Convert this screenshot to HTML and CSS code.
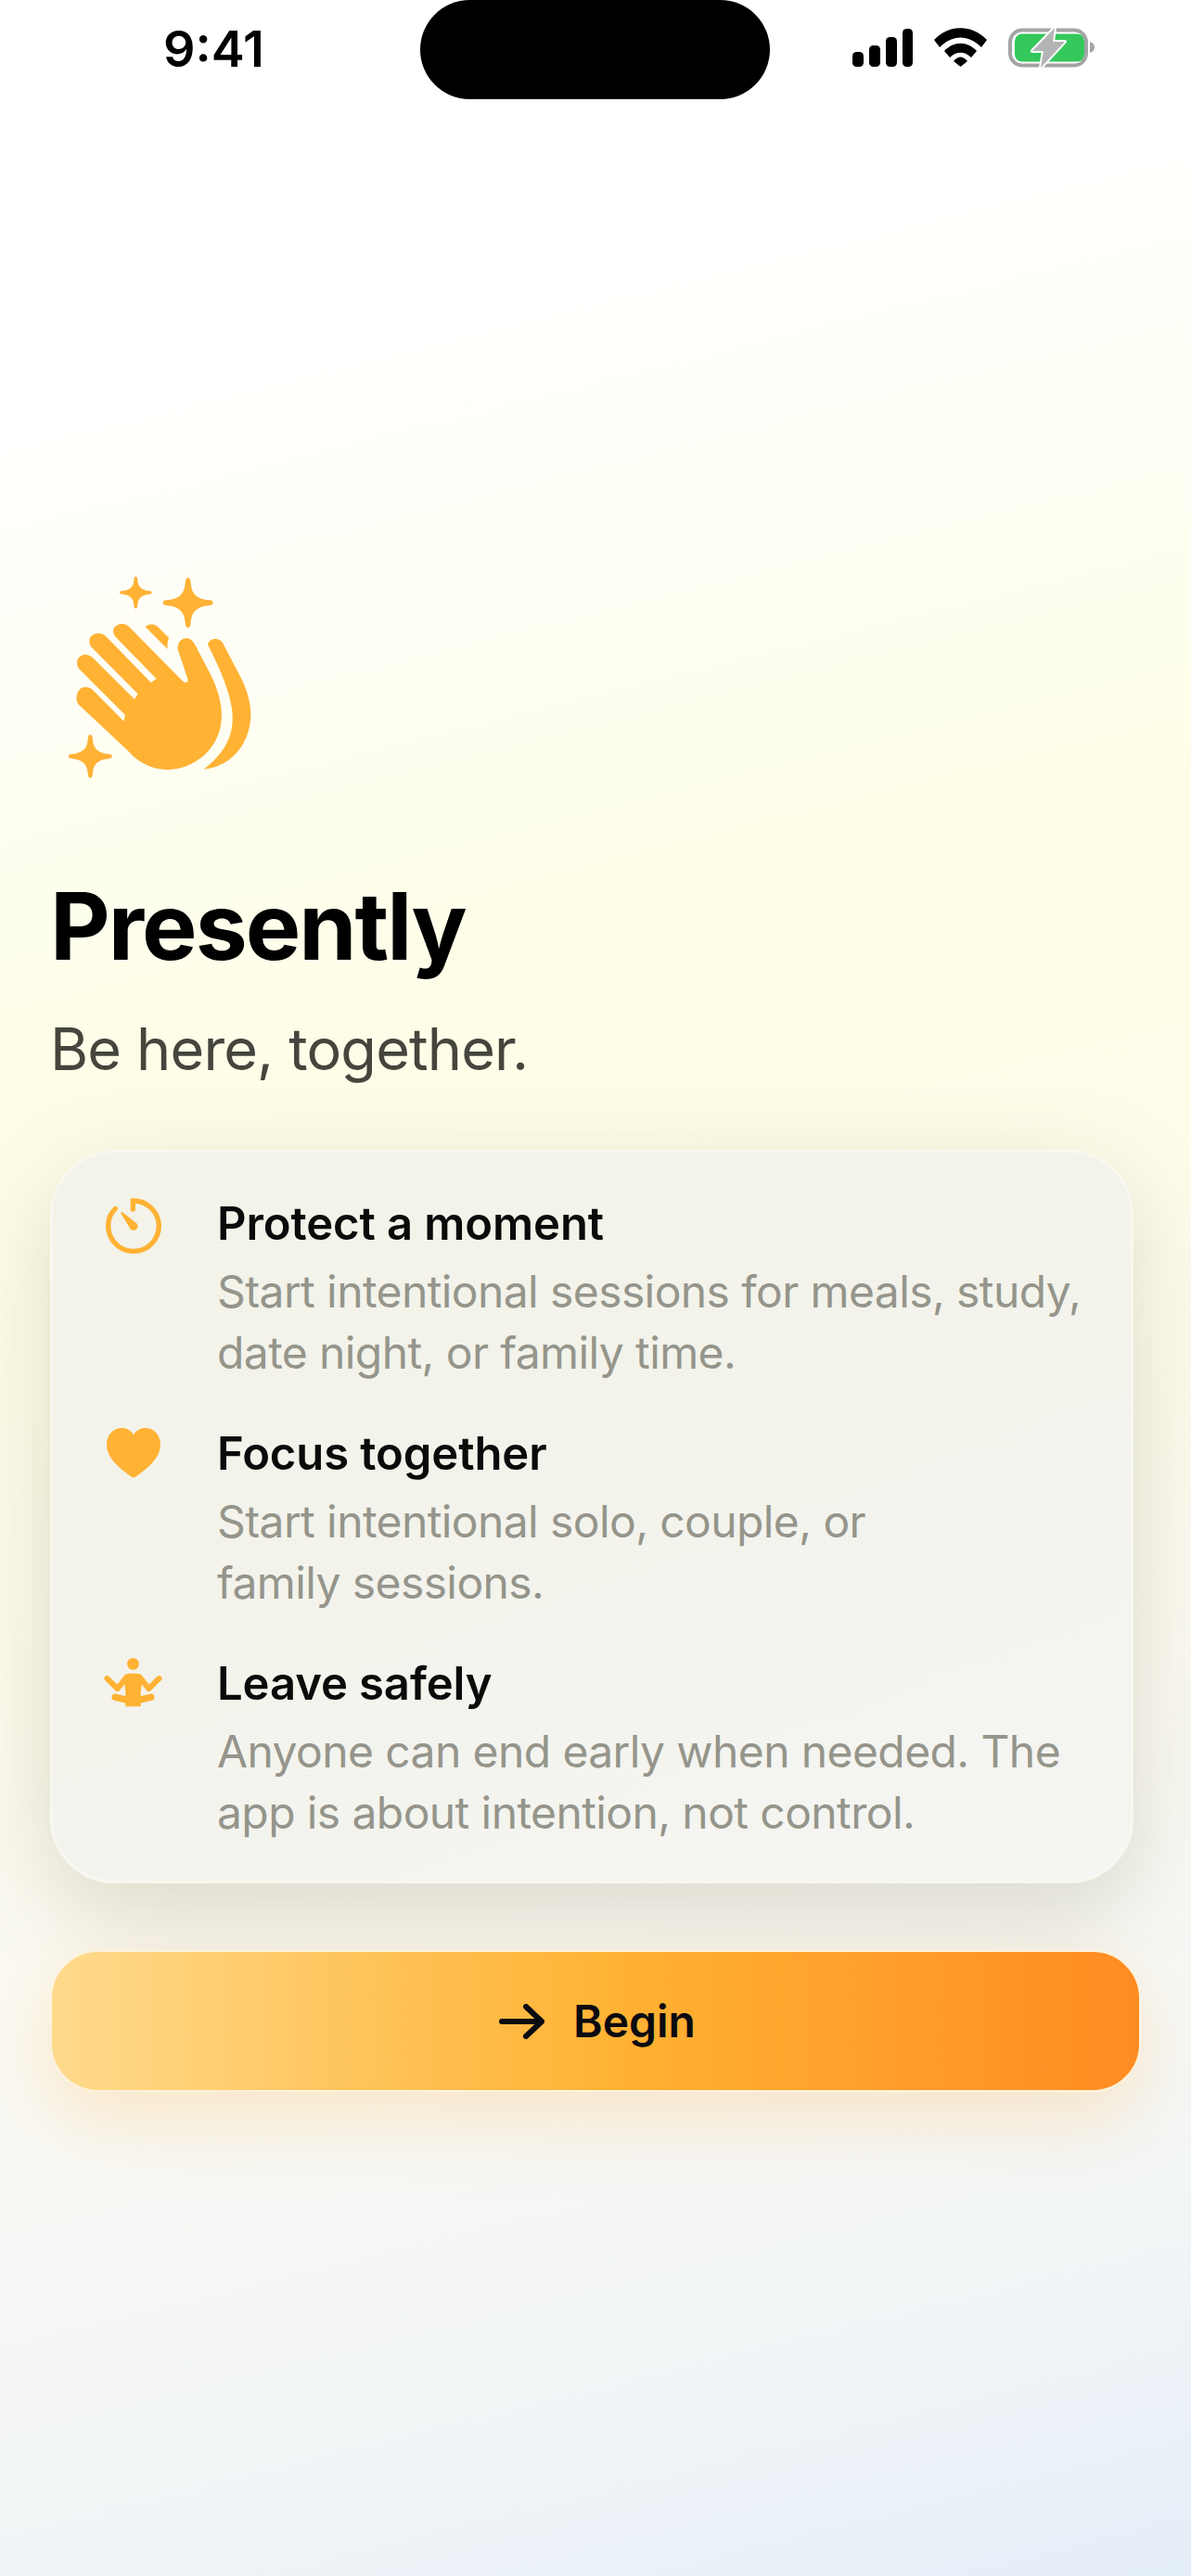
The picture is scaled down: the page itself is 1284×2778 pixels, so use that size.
FILE: index.html
```html
<!DOCTYPE html>
<html>

<head>
	<title>Presently</title>
	<link rel="stylesheet" href="styles.css">
</head>

<body>
	<div id="screen">
		<div class="status">
			<div class="time">9:41</div>
			<div class="notch"></div>
			<div class="status-icons">
				<svg class="signal" viewBox="0 0 65 41">
					<rect x="0" y="25" width="12" height="16" rx="4.5"/>
					<rect x="18" y="18" width="12" height="23" rx="4.5"/>
					<rect x="36" y="9" width="12" height="32" rx="4.5"/>
					<rect x="54" y="0" width="11" height="41" rx="4.5"/>
				</svg>
				<svg class="wifi" viewBox="0 0 57 42">
					<path d="M0 13 C16 -4 41 -4 57 13 L51 21 C37 7 20 7 6 21 Z"/>
					<path d="M11 25 C21 14 36 14 46 25 L40 32 C33 25 24 25 17 32 Z"/>
					<path d="M21 36 C26 30 31 30 36 36 L28.500 42 Z"/>
				</svg>
				<svg class="battery" viewBox="0 0 93 44">
					<rect x="2" y="3.500" width="82" height="38" rx="13" fill="none" stroke="#a4a4a4" stroke-width="4"/>
					<rect x="7" y="7.500" width="75" height="30" rx="8" fill="#34c85a"/>
					<path d="M50 1 L26 26 L38 26 L35 44 L61 16 L48 16 Z" fill="#b4b4b4" stroke="#fff" stroke-width="4" stroke-linejoin="round" paint-order="stroke"/>
					<path d="M88 16 C91 17 93 19 93 22 C93 25 91 27 88 28 Z" fill="#a4a4a4"/>
				</svg>
			</div>
		</div>

		<div class="hero">
			<svg class="clap" viewBox="0 0 780 780">
				<defs>
					<path id="spark" d="M0 -100 C8 -100 10 -92 11 -80 C14 -40 30 -15 88 -10 C97 -9 100 -5 100 0 C100 5 97 9 88 10 C30 15 14 40 11 80 C10 92 8 100 0 100 C-8 100 -10 92 -11 80 C-14 40 -30 15 -88 10 C-97 9 -100 5 -100 0 C-100 -5 -97 -9 -88 -10 C-30 -15 -14 -40 -11 -80 C-10 -92 -8 -100 0 -100 Z"/>
				</defs>
				<use href="#spark" transform="translate(319 117) scale(.52)"/>
				<use href="#spark" transform="translate(488 150) scale(.81)"/>
				<use href="#spark" transform="translate(172 647) scale(.7)"/>
				<path d="M135 480 C122 465 127 440 140 428 C152 420 170 422 180 432 L280 533 L285 513 L140 368 C125 355 125 332 142 322 C155 314 170 318 180 328 L315 462 L326 445 L180 298 C165 285 165 262 180 254 C195 245 210 248 222 258 L368 408 L386 396 L255 262 C240 245 245 228 262 221 C275 215 290 220 300 230 L470 403 C480 412 490 408 487 395 L458 310 C448 285 465 265 482 265 C495 265 505 275 512 288 L560 380 C585 430 600 480 596 530 C590 620 510 690 420 690 C370 690 325 665 295 630 Z"/>
				<path d="M552 285 C555 268 585 258 600 280 L650 375 C680 430 695 480 690 530 C680 620 620 680 540 689 C600 640 635 590 632 515 C630 450 590 360 552 285 Z"/>
				<path d="M350 228 C360 217 378 217 388 226 L426 263 C422 275 420 290 422 300 Z"/>
			</svg>
			<h1>Presently</h1>
			<p class="tagline">Be here, together.</p>
		</div>

		<div class="card">
			<div class="row">
				<svg class="ico timer" viewBox="0 0 180 180">
					<path d="M88 36 L88 9 C132 8 172 44 172 90 C172 135 135 172 90 172 C45 172 8 135 8 90 C8 67 17 48 31 35" fill="none" stroke="#ffb233" stroke-width="16" stroke-linecap="round"/>
					<path d="M48 48 C50 45 53 45 56 47 L100 82 C107 90 104 103 91 105 C84 105 80 102 77 96 Z" fill="#ffb233"/>
				</svg>
				<div class="row-text">
					<h2>Protect a moment</h2>
					<p>Start intentional sessions for meals, study,<br>date night, or family time.</p>
				</div>
			</div>
			<div class="row">
				<svg class="ico heart" viewBox="0 0 176 164">
					<path d="M88 162 C84 162 80 158 72 153 C35 127 0 95 0 55 C0 22 22 0 50 0 C66 0 80 8 88 22 C96 8 110 0 126 0 C154 0 176 22 176 55 C176 95 141 127 104 153 C96 158 92 162 88 162 Z" fill="#ffb233"/>
				</svg>
				<div class="row-text">
					<h2>Focus together</h2>
					<p>Start intentional solo, couple, or<br>family sessions.</p>
				</div>
			</div>
			<div class="row">
				<svg class="ico person" viewBox="0 0 187 161">
					<g fill="#ffb233">
						<circle cx="93.500" cy="19" r="19"/>
						<path d="M82 50 L105 50 C114 50 119 54 124 62 L118 108 L118 156 L69 156 L69 108 L63 62 C68 54 73 50 82 50 Z"/>
					</g>
					<g fill="none" stroke="#ffb233" stroke-linecap="round" stroke-linejoin="round">
						<path d="M10 66 L43 99 L72 62" stroke-width="18"/>
						<path d="M177 66 L144 99 L115 62" stroke-width="18"/>
						<path d="M36 126 L93.500 140 L151 126" stroke-width="22"/>
					</g>
				</svg>
				<div class="row-text">
					<h2>Leave safely</h2>
					<p>Anyone can end early when needed. The<br>app is about intention, not control.</p>
				</div>
			</div>
		</div>

		<button class="begin">
			<svg class="arrow" viewBox="0 0 49 38">
				<path d="M3 19 L46 19 M29 3 L46 19 L29 35" fill="none" stroke="#0a0a10" stroke-width="6" stroke-linecap="round" stroke-linejoin="round"/>
			</svg>
			Begin
		</button>
	</div>
</body>

</html>
```

FILE: styles.css
```css
* {
	box-sizing: border-box;
}

body {
	margin: 0;
	font-family: "Inter", sans-serif;
}

#screen {
	width: 1284px;
	height: 2778px;
	overflow: hidden;
	padding-bottom: 1px;
	background-image: linear-gradient(166deg, #ffffff 0%, #ffffff 13%, #fefef5 25%, #fefee8 37%, #fefde8 44%, #fdfbee 60%, #f9f9f4 73%, #f2f5f6 88%, #e4eef8 100%);
}

.status {
	display: grid;
	grid-template-columns: 453px 377px 1fr;
	height: 107px;
}

.time {
	font-size: 54px;
	font-weight: 600;
	color: #000;
	padding: 21px 0 0 176px;
	line-height: 64px;
}

.notch {
	background: #000;
	border-radius: 54px;
}

.status-icons {
	display: flex;
	align-items: flex-start;
	padding: 30px 0 0 89px;
}

.signal {
	width: 65px;
	height: 41px;
	margin-top: 1px;
	margin-right: 23px;
}

.wifi {
	width: 57px;
	height: 42px;
	margin-right: 23px;
}

.battery {
	width: 93px;
	height: 44px;
	margin-top: -1px;
}

.hero {
	padding: 493px 0 0 40px;
}

.clap {
	display: block;
	width: 260px;
	height: 260px;
	fill: #ffb233;
}

h1 {
	margin: 81px 0 0 14px;
	font-size: 100px;
	line-height: 116px;
	font-weight: 700;
	color: #000;
	letter-spacing: -2px;
}

.tagline {
	margin: 38px 0 0 14px;
	font-size: 63px;
	line-height: 72px;
	font-weight: 400;
	color: #45453d;
	letter-spacing: -.85px;
}

.card {
	margin: 73px 0 0 54px;
	width: 1168px;
	height: 791px;
	padding: 49px 0 0 57px;
	border: 3px solid #f8f8f0;
	border-radius: 70px;
	background-image: linear-gradient(160deg, #f3f3e9 0%, #f3f3eb 40%, #f5f5f3 100%);
	box-shadow: 0 30px 100px rgba(110, 100, 60, .22);
}

.row {
	display: flex;
	height: 248px;
}

.ico {
	flex: none;
}

.timer {
	width: 60px;
	height: 60px;
	margin-right: 60px;
}

.heart {
	width: 58px;
	height: 54px;
	margin: 0 61px 0 1px;
}

.person {
	width: 63px;
	height: 54px;
	margin: 0 59px 0 -2px;
}

.row-text {
	margin-top: -1px;
}

h2 {
	margin: 0;
	font-size: 49px;
	line-height: 58px;
	font-weight: 600;
	color: #0a0a0a;
	letter-spacing: -.1px;
}

.row-text p {
	margin: 11px 0 0;
	font-size: 48px;
	line-height: 65.500px;
	color: #95958b;
	letter-spacing: -.6px;
}

.begin {
	display: flex;
	align-items: center;
	justify-content: center;
	gap: 31px;
	margin: 72px 0 0 54px;
	width: 1176px;
	height: 153px;
	padding: 0 0 0 4px;
	border: 2px solid #fdf3dc;
	border-radius: 52px;
	background-image: linear-gradient(90deg, #ffda8c 0%, #ffb233 52%, #ff8c22 100%);
	box-shadow: 0 30px 80px rgba(255, 170, 60, .24);
	font-family: "Inter", sans-serif;
	font-size: 48px;
	font-weight: 600;
	color: #0a0a10;
}

.arrow {
	width: 49px;
	height: 38px;
}
```
